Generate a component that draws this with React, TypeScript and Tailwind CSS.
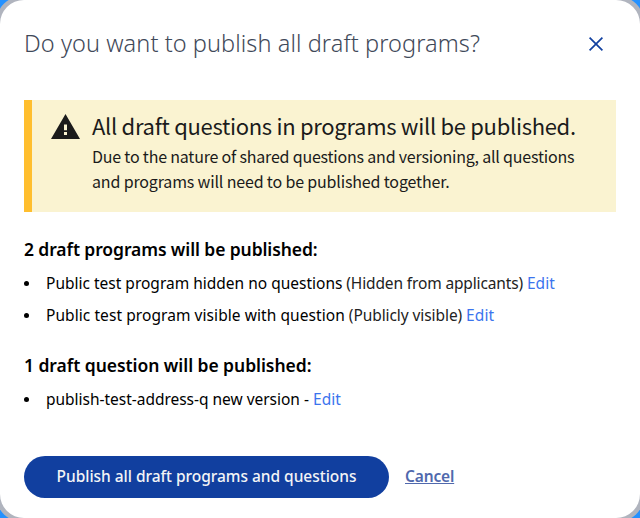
import type { ReactNode } from 'react'

function CloseIcon() {
  return (
    <svg className="size-4" viewBox="0 0 16 16" fill="none" stroke="#1140a0" strokeWidth="1.7">
      <path d="M1.6 1.6 14.4 14.4M14.4 1.6 1.6 14.4" />
    </svg>
  )
}

function WarningIcon() {
  return (
    <svg className="mt-[14px] ml-[0.5px] h-[25px] w-[29px] shrink-0" viewBox="0 0 29 25" fill="#1b1b1b">
      <path fillRule="evenodd" d="M0 25h29L14.5 0 0 25Zm16-4h-3v-3h3V21Zm0-4.8h-3v-5.7h3v5.7Z" />
    </svg>
  )
}

function Edit() {
  return <a href="#" className="font-normal tracking-[0.1px] text-[#3b74ee]">Edit</a>
}

function Item({ children }: { children: ReactNode }) {
  return (
    <li className="flex h-8 items-center whitespace-pre text-[15.5px]">
      <span className="mr-[17px] size-[5px] rounded-full bg-black" />
      <span className="mt-px">{children}</span>
    </li>
  )
}

export default function App() {
  return (
    <div className="h-[518px] w-[640px] overflow-hidden bg-[#2491ff] font-['Noto_Sans','Open_Sans',sans-serif] text-black">
      <main className="flex h-full flex-col rounded-[24px] bg-white px-6 shadow-[0_0_0_4.5px_#b0b4be]">
        <header className="flex h-[100px] shrink-0 items-start justify-between pr-3">
          <h1 className="mt-[27px] whitespace-nowrap text-[23.5px] leading-8 font-[350] tracking-[0.08px] text-[#3f4959]">Do you want to publish all draft programs?</h1>
          <button className="mt-9" aria-label="Close"><CloseIcon /></button>
        </header>
        <section className="flex h-28 shrink-0 border-l-8 border-[#ffbe2e] bg-[#faf3d1] pl-[18px] font-['Noto_Sans_CJK_SC',sans-serif] text-[#1b1b1b]">
          <WarningIcon />
          <div className="ml-[12.5px] whitespace-nowrap">
            <h2 className="mt-[9px] text-[22px] leading-8 tracking-[-0.3px]">All draft questions in programs will be published.</h2>
            <p className="mt-[3px] text-[16px] leading-[25px] tracking-[-0.2px]">Due to the nature of shared questions and versioning, all questions</p>
            <p className="text-[16px] leading-[25px] tracking-[-0.16px]">and programs will need to be published together.</p>
          </div>
        </section>
        <h3 className="mt-[23px] text-[17.5px] leading-7 font-semibold tracking-[-0.1px]">2 draft programs will be published:</h3>
        <ul className="mt-[4px]">
          <Item><span className="font-[450]">Public test program hidden no questions</span><span className="tracking-[-0.14px] text-[#222]"> (Hidden from applicants) </span><Edit /></Item>
          <Item><span className="font-[450] tracking-[0.07px]">Public test program visible with question</span><span className="tracking-[-0.08px] text-[#222]"> (Publicly visible) </span><Edit /></Item>
        </ul>
        <h3 className="mt-[20px] text-[17.5px] leading-7 font-semibold tracking-[-0.05px]">1 draft question will be published:</h3>
        <ul className="mt-[4px]">
          <Item><span className="font-[450] tracking-[-0.02px]">publish-test-address-q new version - </span><Edit /></Item>
        </ul>
        <footer className="mt-[41px] flex items-center gap-4 text-[15.5px] font-medium tracking-[-0.03px]">
          <button className="h-[42px] w-[365px] whitespace-nowrap rounded-full bg-[#113f9f] text-[#f3f4f6]">Publish all draft programs and questions</button>
          <button className="font-semibold tracking-[-0.15px] text-[#5069ad] underline">Cancel</button>
        </footer>
      </main>
    </div>
  )
}
